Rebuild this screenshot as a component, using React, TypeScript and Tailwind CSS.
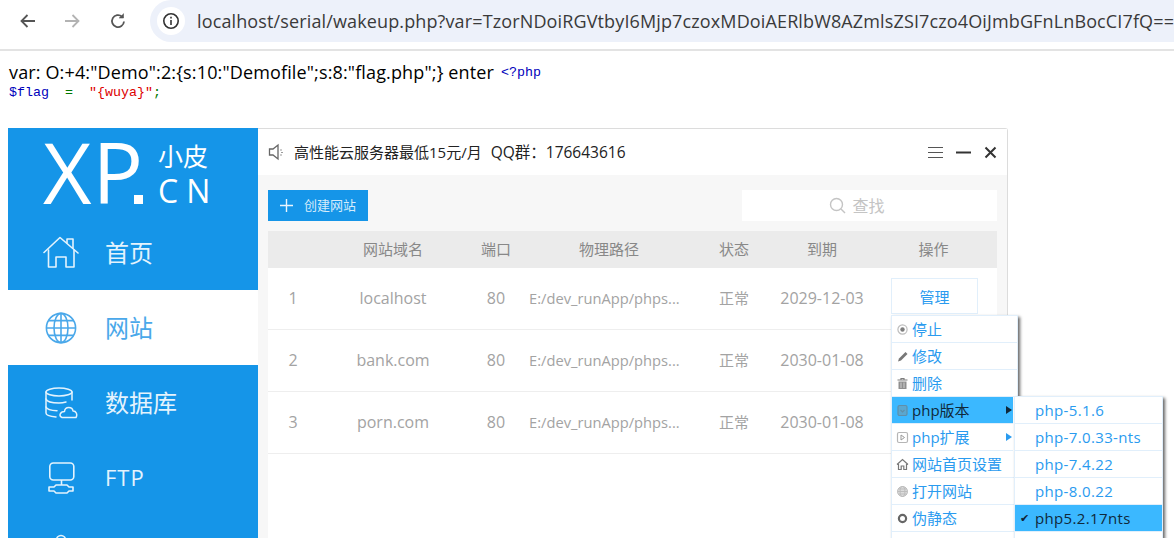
const cjk = "font-['Open_Sans','Noto_Sans_CJK_SC',sans-serif]";

function HomeIcon() {
  return (
    <svg width="36" height="34" viewBox="0 0 36 34" fill="none" stroke="currentColor" strokeWidth="1.6" strokeLinejoin="round" strokeLinecap="round">
      <path d="M1 16.5 L17 1.5 L35 17" />
      <path d="M24 7 V3 H30 V12" />
      <path d="M5.5 14 V31 H13 V21 H23 V31 H31 V14" />
    </svg>
  );
}

function GlobeIcon() {
  return (
    <svg width="32" height="32" viewBox="0 0 32 32" fill="none" stroke="currentColor" strokeWidth="1.6">
      <circle cx="16" cy="16" r="14.6" />
      <ellipse cx="16" cy="16" rx="7" ry="14.6" />
      <path d="M16 1.4 V30.6 M1.4 16 H30.6 M3.6 8.6 H28.4 M3.6 23.4 H28.4" />
    </svg>
  );
}

function DatabaseIcon() {
  return (
    <svg width="33" height="32" viewBox="0 0 33 32" fill="none" stroke="currentColor" strokeWidth="1.5" strokeLinecap="round" strokeLinejoin="round">
      <ellipse cx="14" cy="5" rx="13" ry="4" />
      <path d="M1 5 V26 C1 28 5 29.5 11 30" />
      <path d="M27 5 V13" />
      <path d="M1 12 C2 15 8 16 14 16 C17 16 19 15.6 21 15" />
      <path d="M1 20 C2 22.5 6 23.5 12 23.8" />
      <path d="M17 30.5 H31 C32.8 27.5 31 23.8 28 24 C27.4 19.5 20 19 19.5 24.5 C15 24.5 13.5 29 17 30.5 Z" />
    </svg>
  );
}

function FtpIcon() {
  return (
    <svg width="27" height="32" viewBox="0 0 27 32" fill="none" stroke="currentColor" strokeWidth="1.6" strokeLinejoin="round">
      <rect x="1.8" y="1" width="24" height="17" rx="3.5" />
      <path d="M13.5 18 V23" />
      <path d="M8 23 H19 L21 25 H25 V29 H21 L19 31 H8 L6 29 H1 V25 H6 Z" />
    </svg>
  );
}

function NextIcon() {
  return (
    <svg width="32" height="8" viewBox="0 0 32 8" fill="none" stroke="currentColor" strokeWidth="1.6">
      <path d="M0 6 H11 M21 6 H32" />
      <circle cx="16" cy="6" r="4.5" />
    </svg>
  );
}

function NavItem({ icon, label, active, latin }: { icon: React.ReactNode; label: string; active?: boolean; latin?: boolean }) {
  return (
    <div className={`flex h-[75px] items-center pl-[31px] ${active ? "bg-white text-[#4aa8ea]" : "bg-[#1595e8] text-[#e4f3fd]"}`}>
      <div className="flex w-[44px] justify-center">{icon}</div>
      <span className={`ml-[22px] ${latin ? "text-[22px] tracking-[1px]" : "text-[24px]"}`}>{label}</span>
    </div>
  );
}

function MenuGlyph({ name }: { name: string }) {
  const base = { width: 13, height: 13, viewBox: "0 0 13 13", fill: "none", stroke: "#8a8a8a", strokeWidth: 1.2 };
  if (name === "stop")
    return (
      <svg {...base}>
        <circle cx="6.5" cy="6.5" r="4.6" stroke="#bdbdbd" />
        <circle cx="6.5" cy="6.5" r="2.2" fill="#7d7d7d" stroke="none" />
      </svg>
    );
  if (name === "edit")
    return (
      <svg {...base}>
        <path d="M2 11.5 L3 8.5 L9.5 2 L11.5 4 L5 10.5 Z" fill="#777" stroke="none" />
      </svg>
    );
  if (name === "trash")
    return (
      <svg {...base}>
        <path d="M1.5 3 H11.5 M5 3 V1.5 H8 V3" stroke="#7d7d7d" />
        <path d="M2.5 4.5 H10.5 V12 H2.5 Z" fill="#8f8f8f" stroke="none" />
        <path d="M5 5.5 V11 M8 5.5 V11" stroke="#d8d8d8" strokeWidth="0.9" />
      </svg>
    );
  if (name === "version")
    return (
      <svg {...base} stroke="#5f8fa9">
        <rect x="2" y="1.5" width="9" height="10" rx="1.5" fill="#5aa7cf" />
        <path d="M4.5 6 L6.5 8 L8.5 6" />
      </svg>
    );
  if (name === "ext")
    return (
      <svg {...base} stroke="#b5b5b5">
        <rect x="1.5" y="1.5" width="10" height="10" rx="1.5" />
        <path d="M5 4 L8.5 6.5 L5 9 Z" stroke="#999" strokeWidth="1" />
      </svg>
    );
  if (name === "home")
    return (
      <svg {...base} stroke="#777">
        <path d="M1 6.5 L6.5 1.5 L12 6.5 M2.5 6 V11.5 H5.2 V8 H7.8 V11.5 H10.5 V6" />
      </svg>
    );
  if (name === "globe")
    return (
      <svg {...base} stroke="#bdbdbd" strokeWidth={1}>
        <circle cx="6.5" cy="6.5" r="5" fill="#dcdcdc" />
        <ellipse cx="6.5" cy="6.5" rx="2.4" ry="5" />
        <path d="M1.5 6.5 H11.5 M2.3 4 H10.7 M2.3 9 H10.7" />
      </svg>
    );
  return (
    <svg {...base}>
      <circle cx="6.5" cy="6.5" r="3.6" stroke="#666" strokeWidth="2.2" />
    </svg>
  );
}

const menuItems = [
  { glyph: "stop", label: "停止" },
  { glyph: "edit", label: "修改" },
  { glyph: "trash", label: "删除" },
  { glyph: "version", label: "php版本", arrow: true, active: true },
  { glyph: "ext", label: "php扩展", arrow: true },
  { glyph: "home", label: "网站首页设置" },
  { glyph: "globe", label: "打开网站" },
  { glyph: "ring", label: "伪静态" },
  { glyph: "", label: "" },
];

const versions = ["php-5.1.6", "php-7.0.33-nts", "php-7.4.22", "php-8.0.22", "php5.2.17nts"];

function VersionMenu() {
  return (
    <div className="absolute left-[122px] top-[80px] z-20 w-[149px] border border-[#e1effb] bg-white shadow-[2px_2px_3px_#666]">
      {versions.map((v, i) => {
        const current = i === versions.length - 1;
        return (
          <div key={v} className={`flex h-[27px] items-center border-b border-[#e1effb] text-[15px] tracking-[0.35px] ${current ? "bg-[#3bb8ff] text-[#10293a]" : "text-[#2a9bef]"}`}>
            <span className="flex w-[20px] justify-center text-[11px] text-[#123]">{current ? "✔" : ""}</span>
            {v}
          </div>
        );
      })}
      <div className="h-[6px]" />
    </div>
  );
}

function ActionMenu() {
  return (
    <div className="absolute left-[21px] top-[32px] z-10 w-[127px] border border-[#e1effb] bg-white shadow-[2px_2px_3px_#666]">
      {menuItems.map((item, i) => (
        <div key={i} className={`flex h-[27px] items-center border-b border-[#e1effb] pl-[4px] text-[15px] ${item.active ? "mr-[4px] bg-[#3bb8ff] text-[#10293a]" : item.arrow ? "mr-[4px] text-[#2a9bef]" : "text-[#2a9bef]"}`}>
          {item.glyph && <MenuGlyph name={item.glyph} />}
          <span className="ml-[3px]">{item.label}</span>
          {item.arrow && <span className={`ml-auto mr-[1px] h-0 w-0 border-y-[4px] border-l-[6px] border-y-transparent ${item.active ? "border-l-[#10293a]" : "border-l-[#2a9bef]"}`} />}
        </div>
      ))}
      <VersionMenu />
    </div>
  );
}

const sites = [
  { id: 1, domain: "localhost", expires: "2029-12-03" },
  { id: 2, domain: "bank.com", expires: "2030-01-08" },
  { id: 3, domain: "porn.com", expires: "2030-01-08" },
];

const gridCols = "grid grid-cols-[50px_150px_56px_170px_80px_96px_127px] items-center text-center";

export default function App() {
  return (
    <div className={`h-[538px] w-[1174px] overflow-hidden bg-white ${cjk}`}>
      {/* Browser chrome */}
      <div className="flex h-[51px] items-start border-b-2 border-[#e3e3e3]">
        <div className="flex h-[42px] w-[150px] shrink-0 items-center pl-[19px] text-[#444]">
          <svg width="18" height="18" viewBox="0 0 18 18" fill="none" stroke="#555" strokeWidth="1.8"><path d="M16 9 H3 M8.5 3 L2.5 9 L8.5 15" /></svg>
          <svg className="ml-[26px]" width="18" height="18" viewBox="0 0 18 18" fill="none" stroke="#b3b3b3" strokeWidth="1.8"><path d="M2 9 H15 M9.5 3 L15.5 9 L9.5 15" /></svg>
          <svg className="ml-[28px]" width="18" height="18" viewBox="0 0 18 18" fill="none" stroke="#555" strokeWidth="1.8"><path d="M15 9.5 A6 6 0 1 1 13 4.6" /><path d="M14.5 1.5 V6 H10" fill="#555" strokeWidth="0.6" /></svg>
        </div>
        <div className="flex h-[42px] min-w-0 flex-1 items-center overflow-hidden rounded-bl-[21px] rounded-tl-[21px] bg-[#edf1fa] pl-[7px]">
          <div className="flex size-[28px] shrink-0 items-center justify-center rounded-full bg-white">
            <svg width="18" height="18" viewBox="0 0 18 18" fill="none" stroke="#333" strokeWidth="1.6"><circle cx="9" cy="9" r="7.2" /><path d="M9 8 V13" /><path d="M9 4.8 V6.4" /></svg>
          </div>
          <span className="ml-[12px] whitespace-nowrap text-[18px] tracking-[0.13px] text-[#3a3a3a]">localhost/serial/wakeup.php?var=TzorNDoiRGVtbyI6Mjp7czoxMDoiAERlbW8AZmlsZSI7czo4OiJmbGFnLnBocCI7fQ==</span>
        </div>
      </div>

      {/* Script output */}
      <div className="h-[77px] pl-[9px] pt-[11px]">
        <div className="flex h-[21px] items-center whitespace-nowrap">
          <span className="text-[18px] tracking-[0.14px] text-black">var: O:+4:"Demo":2:{"{"}s:10:"Demofile";s:8:"flag.php";{"}"} enter</span>
          <span className="ml-[7px] font-['Liberation_Mono',monospace] text-[13.33px] text-[#0000bb]">&lt;?php</span>
        </div>
        <div className="mt-[2px] whitespace-pre font-['Liberation_Mono',monospace] text-[13.33px] leading-[16px]">
          <span className="text-[#0000bb]">$flag</span>
          <span className="text-[#007700]">  =  </span>
          <span className="text-[#dd0000]">"{"{"}wuya{"}"}"</span>
          <span className="text-[#007700]">;</span>
        </div>
      </div>

      {/* App window */}
      <div className="ml-[8px] flex h-[410px] w-[999px]">
        <div className="w-[250px] shrink-0 bg-[#1595e8]">
          <div className="flex h-[87px] items-center pl-[35px] text-white">
            <span className="text-[84px] font-medium leading-none tracking-[1px]">XP</span>
            <span className="-ml-[10px] mt-[56px] size-[9px] shrink-0 bg-white" />
            <div className="ml-[15px] mt-[5px] flex flex-col">
              <span className="text-[25px] leading-[25px]">小皮</span>
              <span className="mt-[9px] text-[32px] leading-[26px] tracking-[8px]">CN</span>
            </div>
          </div>
          <NavItem icon={<HomeIcon />} label="首页" />
          <NavItem icon={<GlobeIcon />} label="网站" active />
          <NavItem icon={<DatabaseIcon />} label="数据库" />
          <NavItem icon={<FtpIcon />} label="FTP" latin />
          <div className="flex items-end pl-[31px] pt-[19px] text-[#e4f3fd]">
            <div className="flex w-[44px] justify-center"><NextIcon /></div>
          </div>
        </div>

        <div className="flex flex-1 flex-col rounded-tr-[3px] border-r border-t border-[#dcdcdc] bg-[#f7f7f7]">
          <div className="flex h-[46px] shrink-0 items-center bg-white pl-[10px] pr-[10px]">
            <svg width="18" height="18" viewBox="0 0 18 18" fill="none" stroke="#666" strokeWidth="1.3"><path d="M1.5 6 H5 L10 2 V16 L5 12 H1.5 Z" /><path d="M13 6.5 V7.5 M14 9 V10 M13 11.5 V12.5" /></svg>
            <span className="ml-[8px] mt-[1px] text-[15px] text-[#222]">高性能云服务器最低15元/月</span>
            <span className="ml-[9px] mt-[1px] text-[15.5px] text-[#222]">QQ群：176643616</span>
            <div className="ml-auto flex items-center gap-[13px]">
              <svg width="15" height="13" viewBox="0 0 15 13" stroke="#555" strokeWidth="1"><path d="M0 1.5 H15 M0 6.5 H15 M0 11.5 H15" /></svg>
              <svg width="15" height="13" viewBox="0 0 15 13" stroke="#333" strokeWidth="2"><path d="M0 6.5 H15" /></svg>
              <svg width="13" height="13" viewBox="0 0 13 13" stroke="#333" strokeWidth="2"><path d="M1.5 1.5 L11.5 11.5 M11.5 1.5 L1.5 11.5" /></svg>
            </div>
          </div>

          <div className="flex flex-1 flex-col px-[10px] pt-[15px]">
            <div className="flex h-[31px] items-center justify-between">
              <div className="flex h-full w-[100px] items-center gap-[11px] bg-[#1595e8] pl-[12px] text-[#d5ecfb]">
                <svg width="13" height="13" viewBox="0 0 13 13" stroke="#eaf6fe" strokeWidth="1.4"><path d="M6.5 0 V13 M0 6.5 H13" /></svg>
                <span className="text-[13px]">创建网站</span>
              </div>
              <div className="flex h-full w-[255px] items-center justify-center gap-[6px] bg-white pr-[25px] text-[16px] text-[#c4c4c4]">
                <svg width="17" height="17" viewBox="0 0 17 17" fill="none" stroke="#c4c4c4" strokeWidth="1.4"><circle cx="7.5" cy="7.5" r="6" /><path d="M12 12 L16 16" /></svg>
                查找
              </div>
            </div>

            <div className={`${gridCols} mt-[10px] h-[37px] bg-[#ebebeb] text-[15px] text-[#888]`}>
              <span />
              <span>网站域名</span>
              <span>端口</span>
              <span>物理路径</span>
              <span>状态</span>
              <span>到期</span>
              <span>操作</span>
            </div>

            <div className="flex-1 bg-white">
              {sites.map((s, i) => (
                <div key={s.id} className={`${gridCols} h-[62px] border-b border-[#eeeeee] text-[16px] text-[#a3a3a3]`}>
                  <span className="-mt-[1px]">{s.id}</span>
                  <span className="-mt-[1px]">{s.domain}</span>
                  <span className="-mt-[1px]">80</span>
                  <span className="-mt-[1px] pl-[5px] text-left text-[14.7px]">E:/dev_runApp/phps...</span>
                  <span className="-mt-[1px] text-[15px]">正常</span>
                  <span className="-mt-[1px]">{s.expires}</span>
                  <div className="relative">
                    {i === 0 && (
                      <>
                        <div className="-mt-[5px] ml-[21px] flex h-[36px] w-[87px] items-center justify-center border border-[#e1effb] bg-white pt-[3px] text-[15px] text-[#2a9bef]">管理</div>
                        <ActionMenu />
                      </>
                    )}
                  </div>
                </div>
              ))}
            </div>
          </div>
        </div>
      </div>
    </div>
  );
}
